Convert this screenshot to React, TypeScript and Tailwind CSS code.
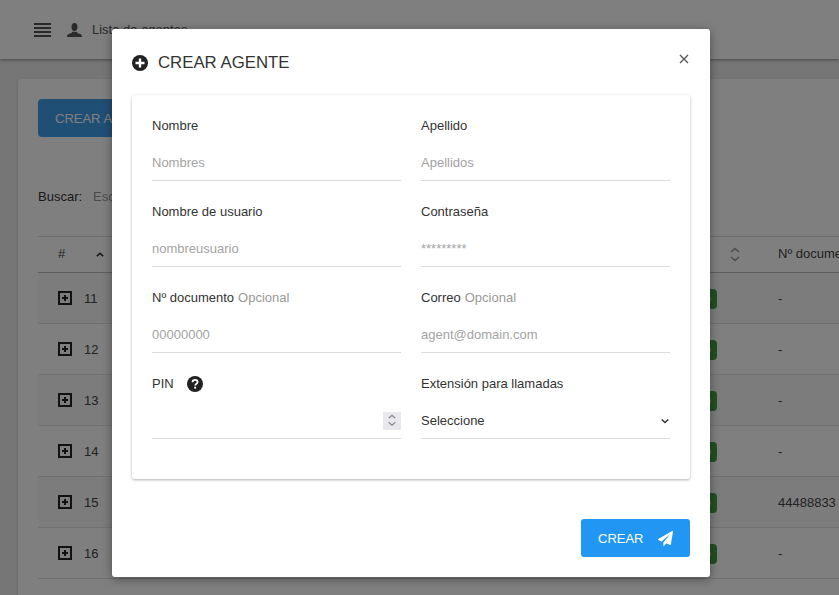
import React from "react";

const rows = [
  { n: 11, doc: "-" },
  { n: 12, doc: "-" },
  { n: 13, doc: "-" },
  { n: 14, doc: "-" },
  { n: 15, doc: "44488833" },
  { n: 16, doc: "-" },
];

function Menu() {
  return (
    <svg width="17" height="14" viewBox="0 0 17 14" fill="#555">
      <rect y="0" width="17" height="2" />
      <rect y="4" width="17" height="2" />
      <rect y="8" width="17" height="2" />
      <rect y="12" width="17" height="2" />
    </svg>
  );
}

function User() {
  return (
    <svg width="15" height="14" viewBox="0 0 15 14" fill="#555">
      <ellipse cx="7.5" cy="4" rx="3" ry="4" />
      <path d="M0 14c0-2.400 1.200-3 3.200-3.500 1.300-.4 1.900-1 2.100-1.800h4.400c.2.800.8 1.400 2.100 1.800 2 .5 3.200 1.100 3.200 3.500z" />
    </svg>
  );
}

function PlusBox() {
  return (
    <svg width="14" height="14" viewBox="0 0 14 14">
      <rect x="1" y="1" width="12" height="12" fill="none" stroke="#222" strokeWidth="2" />
      <path d="M7 4v6M4 7h6" stroke="#222" strokeWidth="2" />
    </svg>
  );
}

function UpDown({ color = "#333", size = 12 }: { color?: string; size?: number }) {
  return (
    <svg width={size} height={size * 1.25} viewBox="0 0 12 15" fill="none" stroke={color} strokeWidth="1.500">
      <path d="M2 5l4-3.500 4 3.500M2 10l4 3.500 4-3.500" />
    </svg>
  );
}

function Field({
  label,
  optional,
  placeholder,
}: {
  label: string;
  optional?: string;
  placeholder: string;
}) {
  return (
    <div className="flex flex-col">
      <div className="h-[18px] flex items-center text-[13px] text-[#333]">
        {label}
        {optional && <span className="ml-1 text-[#999]">{optional}</span>}
      </div>
      <div className="mt-[10px] h-[36px] flex items-center border-b border-[#dcdcdc] text-[13px] text-[#a3a3a3]">
        {placeholder}
      </div>
    </div>
  );
}

export default function App() {
  return (
    <div className="relative h-[595px] w-[839px] overflow-hidden bg-[#ececec] text-[13px] text-[#444] font-['Liberation_Sans',Arial,sans-serif]">
      <header className="h-[59px] bg-white shadow-[0_1px_3px_rgba(0,0,0,0.4)] flex items-center pl-[34px]">
        <Menu />
        <span className="ml-[16px]">
          <User />
        </span>
        <span className="ml-[10px] text-[#555]">Lista de agentes</span>
      </header>

      <main className="px-[18px] pt-[20px]">
        <section className="w-[900px] rounded bg-white pb-[40px] pl-[20px] pt-[20px] shadow-[0_1px_3px_rgba(0,0,0,0.15)]">
          <button className="h-[38px] w-[150px] rounded bg-[#3f9fea] pl-[17px] pt-[1px] text-left text-[13px] text-white">
            CREAR AGENTE
          </button>
          <div className="mt-[50px] flex items-center">
            <span className="text-[#333]">Buscar:</span>
            <span className="ml-[11px] text-[#999]">Escribe aquí</span>
          </div>
          <div className="mt-[29px] border-t border-[#dcdcdc]">
            <div className="flex h-[36px] items-center border-b border-[#bdbdbd]">
              <span className="ml-[20px] w-[38px]">#</span>
              <svg width="8" height="5" viewBox="0 0 10 6" fill="none" stroke="#333" strokeWidth="2">
                <path d="M1 5l4-3.500 4 3.500" />
              </svg>
              <span className="ml-[625px] flex w-[49px]">
                <UpDown color="#999" />
              </span>
              <span>Nº documento</span>
            </div>
            {rows.map((r, i) => (
              <div
                key={r.n}
                className={`flex h-[51px] items-center border-b border-[#e0e0e0] pt-[2px] ${
                  i % 2 === 0 ? "bg-[#f8f8f8]" : "bg-white"
                }`}
              >
                <span className="mb-[2px] ml-[20px] flex w-[26px]">
                  <PlusBox />
                </span>
                <span className="w-[568px]">{r.n}</span>
                <span className="flex h-[20px] w-[65px] items-center justify-end rounded-sm bg-[#43a047] pr-[6px] text-[10px] text-[#ffc107]">
                  Activo
                </span>
                <span className="ml-[61px]">{r.doc}</span>
              </div>
            ))}
          </div>
        </section>
      </main>

      <div className="absolute inset-0 bg-black/50" />

      <div className="absolute left-[112px] top-[29px] h-[548px] w-[598px] rounded-[3px] bg-white p-[20px] shadow-[0_2px_10px_rgba(0,0,0,0.4)]">
        <div className="relative flex h-[46px] items-start">
          <div className="mt-[6px] flex items-center">
            <svg width="16" height="16" viewBox="0 0 16 16">
              <circle cx="8" cy="8" r="8" fill="#222" />
              <path d="M8 3.500v9M3.500 8h9" stroke="#fff" strokeWidth="2.400" />
            </svg>
            <span className="ml-[10px] text-[16.8px] leading-[16px] text-[#333]">CREAR AGENTE</span>
          </div>
          <svg
            className="absolute right-0 top-[4px]"
            width="12"
            height="12"
            viewBox="0 0 12 12"
            stroke="#555"
            strokeWidth="1.300"
          >
            <path d="M2 2l8 8M10 2l-8 8" />
          </svg>
        </div>

        <div className="h-[384px] rounded-[3px] bg-white px-[20px] pt-[22px] shadow-[0_1px_3px_rgba(0,0,0,0.3)]">
          <div className="grid grid-cols-2 gap-x-[20px] gap-y-[22px]">
            <Field label="Nombre" placeholder="Nombres" />
            <Field label="Apellido" placeholder="Apellidos" />
            <Field label="Nombre de usuario" placeholder="nombreusuario" />
            <Field label="Contraseña" placeholder="*********" />
            <Field label="Nº documento" optional="Opcional" placeholder="00000000" />
            <Field label="Correo" optional="Opcional" placeholder="agent@domain.com" />

            <div className="flex flex-col">
              <div className="flex h-[18px] items-center text-[13px] text-[#333]">
                PIN
                <svg className="ml-[13px]" width="16" height="16" viewBox="0 0 16 16">
                  <circle cx="8" cy="8" r="8" fill="#222" />
                  <path
                    d="M5.500 6.200c0-1.500 1.100-2.400 2.600-2.400s2.500.8 2.500 2.100c0 1.900-2.300 1.800-2.300 3.500"
                    fill="none"
                    stroke="#fff"
                    strokeWidth="1.800"
                  />
                  <rect x="7.200" y="10.700" width="1.900" height="1.900" fill="#fff" />
                </svg>
              </div>
              <div className="mt-[10px] flex h-[36px] items-center justify-end border-b border-[#dcdcdc]">
                <span className="flex h-[18px] w-[18px] items-center justify-center bg-[#e8e8ee]">
                  <UpDown color="#888" size={10} />
                </span>
              </div>
            </div>

            <div className="flex flex-col">
              <div className="flex h-[18px] items-center text-[13px] text-[#333]">Extensión para llamadas</div>
              <div className="mt-[10px] flex h-[36px] items-center justify-between border-b border-[#dcdcdc] pr-[1px] text-[13px] text-[#333]">
                Seleccione
                <svg width="8" height="6" viewBox="0 0 8 6" fill="none" stroke="#333" strokeWidth="1.500">
                  <path d="M.7 1.500L4 4.500l3.300-3" />
                </svg>
              </div>
            </div>
          </div>
        </div>

        <div className="mt-[40px] flex justify-end">
          <button className="flex h-[38px] w-[109px] items-center rounded-[3px] bg-[#2196f3] pl-[17px] pt-[1px] text-[13px] text-white">
            CREAR
            <svg className="ml-[14px]" width="15" height="15" viewBox="0 0 1792 1792" fill="#fff">
              <path d="M1764 11q33 24 27 64l-256 1536q-5 29-32 45-14 8-31 8-11 0-24-5l-453-185-242 295q-18 23-49 23-13 0-22-4-19-7-30.500-23.500t-11.500-36.500v-349l864-1059-1069 925-395-162q-37-14-40-55-2-40 32-59l1664-960q15-9 32-9 20 0 36 11z" />
            </svg>
          </button>
        </div>
      </div>
    </div>
  );
}
